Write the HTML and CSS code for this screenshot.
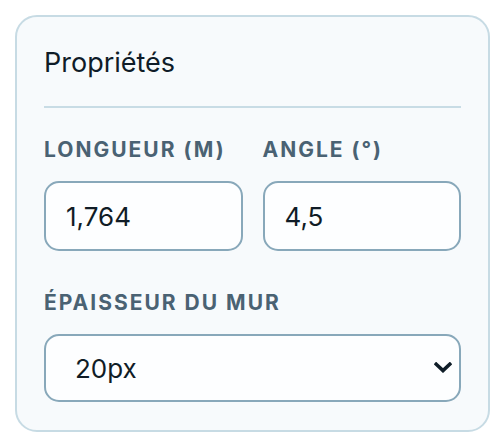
FILE: index.html
```html
<!DOCTYPE html>
<html lang="fr">
<head>
<meta charset="utf-8">
<title>Propriétés</title>
<link rel="stylesheet" href="styles.css">
</head>
<body>
<div class="page">
  <section class="card">
    <h2 class="card-title">Propriétés</h2>
    <div class="row">
      <label class="field">
        <span class="label">Longueur (m)</span>
        <input class="input" type="text" value="1,764">
      </label>
      <label class="field">
        <span class="label">Angle (°)</span>
        <input class="input" type="text" value="4,5">
      </label>
    </div>
    <label class="field field-wide">
      <span class="label">Épaisseur du mur</span>
      <span class="select-wrap">
        <select class="select">
          <option>20px</option>
        </select>
        <svg class="chevron" width="18" height="11" viewBox="0 0 18 11" aria-hidden="true">
          <path d="M2.2 2.2 L9 8.6 L15.8 2.2" fill="none" stroke="#0f1d28" stroke-width="3.6" stroke-linecap="square" stroke-linejoin="miter"/>
        </svg>
      </span>
    </label>
  </section>
</div>
</body>
</html>
```

FILE: styles.css
```css
* { box-sizing: border-box; }

html, body {
  margin: 0;
  padding: 0;
  background: #ffffff;
}

body {
  font-family: Inter, "Noto Sans", "Liberation Sans", sans-serif;
  color: #0f1c28;
}

.page {
  padding: 15px;
}

.card {
  width: 475px;
  background: #f7fafc;
  border: 2px solid #c7dbe4;
  border-radius: 22px;
  padding: 29px 27px 28px 27px;
}

.card-title {
  margin: 0;
  font-size: 27px;
  line-height: 34px;
  font-weight: 400;
  color: #0f1c28;
  padding-bottom: 26px;
  border-bottom: 2px solid #c8dce5;
}

.row {
  display: grid;
  grid-template-columns: 1fr 1fr;
  column-gap: 20px;
  margin-top: 30px;
}

.field {
  display: flex;
  flex-direction: column;
}

.field-wide {
  margin-top: 40px;
}

.label {
  font-size: 21px;
  line-height: 24px;
  font-weight: 700;
  letter-spacing: 2px;
  text-transform: uppercase;
  color: #4a6273;
  margin-bottom: 19px;
}

.input {
  height: 70px;
  width: 100%;
  border: 2px solid #88a8ba;
  border-radius: 15px;
  background: #fdfeff;
  padding: 0 20px;
  font-family: inherit;
  font-size: 26px;
  color: #101c26;
  outline: none;
}

.select-wrap {
  position: relative;
  display: block;
}

.select {
  -webkit-appearance: none;
  appearance: none;
  display: block;
  width: 100%;
  height: 68px;
  border: 2px solid #88a8ba;
  border-radius: 15px;
  background: #fdfeff;
  padding: 0 40px 0 29px;
  font-family: inherit;
  font-size: 26px;
  color: #101c26;
  outline: none;
}

.chevron {
  position: absolute;
  right: 9px;
  top: 28px;
  pointer-events: none;
}
```
